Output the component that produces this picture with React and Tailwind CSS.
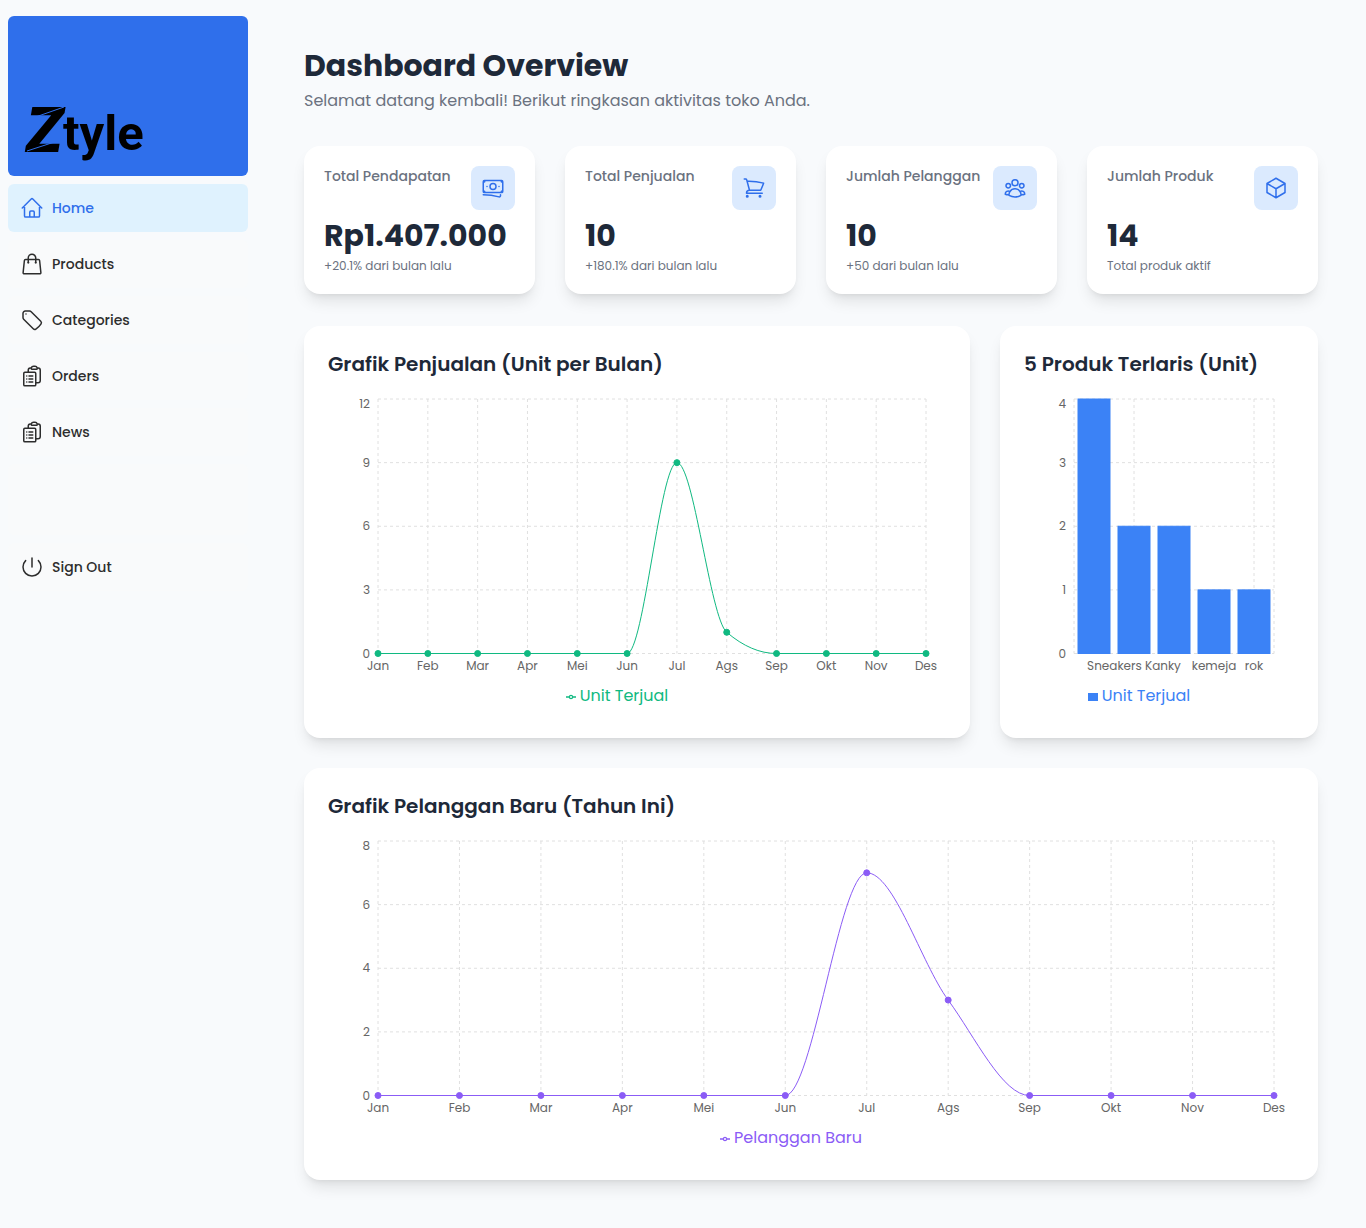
import { useLayoutEffect, useRef, useState } from 'react';
import {
  HiOutlineBanknotes,
  HiOutlineClipboardDocumentList,
  HiOutlineCube,
  HiOutlineHome,
  HiOutlinePower,
  HiOutlineShoppingBag,
  HiOutlineShoppingCart,
  HiOutlineTag,
  HiOutlineUserGroup,
} from 'react-icons/hi2';

const NAV = [
  { label: 'Home', icon: HiOutlineHome, active: true },
  { label: 'Products', icon: HiOutlineShoppingBag },
  { label: 'Categories', icon: HiOutlineTag },
  { label: 'Orders', icon: HiOutlineClipboardDocumentList },
  { label: 'News', icon: HiOutlineClipboardDocumentList },
];

const STATS = [
  { title: 'Total Pendapatan', value: 'Rp1.407.000', note: '+20.1% dari bulan lalu', icon: HiOutlineBanknotes },
  { title: 'Total Penjualan', value: '10', note: '+180.1% dari bulan lalu', icon: HiOutlineShoppingCart },
  { title: 'Jumlah Pelanggan', value: '10', note: '+50 dari bulan lalu', icon: HiOutlineUserGroup },
  { title: 'Jumlah Produk', value: '14', note: 'Total produk aktif', icon: HiOutlineCube },
];

const MONTHS = ['Jan', 'Feb', 'Mar', 'Apr', 'Mei', 'Jun', 'Jul', 'Ags', 'Sep', 'Okt', 'Nov', 'Des'];
const SALES = [0, 0, 0, 0, 0, 0, 9, 1, 0, 0, 0, 0];
const CUSTOMERS = [0, 0, 0, 0, 0, 0, 7, 3, 0, 0, 0, 0];
const TOP_PRODUCTS = [
  { name: '', units: 4 },
  { name: 'Sneakers Kanky', units: 2, grid: true },
  { name: '', units: 2 },
  { name: 'kemeja', units: 1 },
  { name: 'rok', units: 1, grid: true },
];

// Plot area inside every chart's drawing
const LEFT = 50;
const RIGHT = 20;
const TOP = 5;
const PLOT = 254.5;
const BOTTOM = TOP + PLOT;

function useWidth() {
  const ref = useRef(null);
  const [width, setWidth] = useState(0);
  useLayoutEffect(() => {
    const measure = () => setWidth(ref.current.clientWidth);
    measure();
    const observer = new ResizeObserver(measure);
    observer.observe(ref.current);
    return () => observer.disconnect();
  }, []);
  return [ref, width];
}

// Monotone cubic interpolation through the points
function monotonePath(points) {
  const slope = (i) => (points[i + 1][1] - points[i][1]) / (points[i + 1][0] - points[i][0]);
  const tangents = points.map((_, i) => {
    if (i === 0 || i === points.length - 1) return 0;
    const a = slope(i - 1);
    const b = slope(i);
    if (a * b <= 0) return 0;
    return Math.sign(a) * Math.min(2 * Math.abs(a), 2 * Math.abs(b), Math.abs(a + b) / 2);
  });
  return points.reduce((d, [x, y], i) => {
    if (i === 0) return `M${x},${y}`;
    const [px, py] = points[i - 1];
    const dx = (x - px) / 3;
    return `${d}C${px + dx},${py + dx * tangents[i - 1]},${x - dx},${y - dx * tangents[i]},${x},${y}`;
  }, '');
}

function Frame({ width, ticks, max, verticals, children }) {
  const right = width - RIGHT;
  return (
    <>
      <g stroke="#e0e0e0" strokeDasharray="3 3">
        {ticks.map((t) => {
          const y = BOTTOM - (t / max) * PLOT;
          return <line key={t} x1={LEFT} x2={right} y1={y} y2={y} />;
        })}
        {verticals.map((x) => (
          <line key={x} x1={x} x2={x} y1={TOP} y2={BOTTOM} />
        ))}
      </g>
      {ticks.map((t) => (
        <text
          key={t}
          x={LEFT - 8}
          y={Math.max(BOTTOM - (t / max) * PLOT, TOP + 5)}
          dy="4"
          textAnchor="end"
          className="fill-[#666666] text-xs"
        >
          {t}
        </text>
      ))}
      {children}
    </>
  );
}

function LineChart({ data, ticks, color }) {
  const [ref, width] = useWidth();
  const max = ticks[ticks.length - 1];
  const step = (width - LEFT - RIGHT) / (data.length - 1);
  const points = data.map((v, i) => [LEFT + i * step, BOTTOM - (v / max) * PLOT]);
  return (
    <div ref={ref} className="min-w-0">
      {width > 0 && (
        <svg width={width} height="290" className="block overflow-visible">
          <Frame width={width} ticks={ticks} max={max} verticals={points.map((p) => p[0])}>
            <path d={monotonePath(points)} fill="none" stroke={color} />
            {points.map(([x, y], i) => (
              <g key={MONTHS[i]}>
                <circle cx={x} cy={y} r="3" fill={color} stroke={color} />
                <text x={x} y={BOTTOM + 16} textAnchor="middle" className="fill-[#666666] text-xs">
                  {MONTHS[i]}
                </text>
              </g>
            ))}
          </Frame>
        </svg>
      )}
    </div>
  );
}

function BarChart({ data, ticks, color }) {
  const [ref, width] = useWidth();
  const max = ticks[ticks.length - 1];
  const band = (width - LEFT - RIGHT) / data.length;
  const center = (i) => LEFT + band * (i + 0.5);
  const inner = data.map((d, i) => (d.grid ? center(i) : null)).filter((x) => x !== null);
  return (
    <div ref={ref} className="min-w-0">
      {width > 0 && (
        <svg width={width} height="290" className="block overflow-visible">
          <Frame width={width} ticks={ticks} max={max} verticals={[LEFT, ...inner, width - RIGHT]}>
            {data.map((d, i) => {
              const height = (d.units / max) * PLOT;
              return (
                <g key={i}>
                  <rect
                    x={center(i) - band * 0.4}
                    y={BOTTOM - height}
                    width={band * 0.8}
                    height={height}
                    fill={color}
                    stroke={color}
                  />
                  {d.name && (
                    <text x={center(i)} y={BOTTOM + 16} textAnchor="middle" className="fill-[#666666] text-xs">
                      {d.name}
                    </text>
                  )}
                </g>
              );
            })}
          </Frame>
        </svg>
      )}
    </div>
  );
}

function Legend({ label, kind, className }) {
  return (
    <div className={`flex items-center justify-center gap-1 pr-10 text-base leading-6 ${className}`}>
      <svg width="10" height="14" viewBox="0 -1 10 14" aria-hidden="true">
        {kind === 'bar' ? (
          <rect x="0" y="3" width="10" height="8" fill="currentColor" />
        ) : (
          <g fill="none" stroke="currentColor">
            <path d="M0 7h3.3M6.7 7H10" strokeWidth="1.3" />
            <circle cx="5" cy="7" r="1.6" strokeWidth="1.2" />
          </g>
        )}
      </svg>
      <span>{label}</span>
    </div>
  );
}

function Panel({ title, className = '', children }) {
  return (
    <section className={`min-w-0 rounded-2xl bg-white p-6 shadow-lg ${className}`}>
      <h2 className="mb-4 text-xl leading-7 font-semibold text-gray-800">{title}</h2>
      <div className="min-h-80">{children}</div>
    </section>
  );
}

function Logo() {
  return (
    <svg width="136" height="76" viewBox="0 0 136 76" role="img" aria-label="Ztyle" className="font-[Roboto,sans-serif]">
      <text x="2" y="60" className="fill-black text-[62px] font-black italic">Z</text>
      <text x="39" y="58" className="fill-black text-[49px] font-bold">tyle</text>
      <path d="M13 24.500 40 15M3 59 29 50.500" stroke="#2f6feb" strokeWidth="1" />
    </svg>
  );
}

export default function App() {
  return (
    <div className="flex min-h-screen bg-[#f8fafc] font-[Poppins,Inter,sans-serif]">
      <aside className="flex w-64 shrink-0 flex-col gap-2 px-2 py-4 text-sm font-medium text-[#2d2d2d]">
        <a href="#home" className="flex h-40 items-end rounded-md bg-[#2f6feb] px-4 py-2">
          <Logo />
        </a>
        <nav className="flex flex-col gap-2">
          {NAV.map(({ label, icon: Icon, active }) => (
            <a
              key={label}
              href={`#${label.toLowerCase()}`}
              className={`flex h-12 items-center gap-2 rounded-md px-3 ${active ? 'bg-sky-100 text-[#2f6feb]' : 'bg-[#f9fafb]'}`}
            >
              <Icon className="size-6" />
              {label}
            </a>
          ))}
        </nav>
        <div className="h-[71px] rounded-md bg-[#f9fafb]" />
        <button type="button" className="flex h-12 items-center gap-2 rounded-md bg-[#f9fafb] px-3">
          <HiOutlinePower className="size-6" />
          Sign Out
        </button>
      </aside>

      <main className="min-w-0 grow p-12">
        <header className="mb-[33px]">
          <h1 className="text-3xl leading-9 font-bold text-gray-800">Dashboard Overview</h1>
          <p className="mt-[5px] text-base leading-6 text-[#6b7280]">
            Selamat datang kembali! Berikut ringkasan aktivitas toko Anda.
          </p>
        </header>

        <div className="mb-8 grid grid-cols-4 gap-[30px]">
          {STATS.map(({ title, value, note, icon: Icon }) => (
            <section key={title} className="rounded-2xl bg-white p-5 shadow-lg">
              <div className="flex items-start justify-between">
                <h3 className="text-sm leading-5 font-medium whitespace-nowrap text-[#6b7280]">{title}</h3>
                <div className="rounded-lg bg-blue-100 p-2.5 text-[#2f6feb]">
                  <Icon className="size-6" />
                </div>
              </div>
              <p className="mt-2 text-3xl leading-9 font-bold text-gray-800">{value}</p>
              <p className="mt-1 text-xs leading-4 text-[#6b7280]">{note}</p>
            </section>
          ))}
        </div>

        <div className="grid grid-cols-3 gap-[30px]">
          <Panel title="Grafik Penjualan (Unit per Bulan)" className="col-span-2">
            <LineChart data={SALES} ticks={[0, 3, 6, 9, 12]} color="#10b981" />
            <Legend label="Unit Terjual" className="text-[#10b981]" />
          </Panel>
          <Panel title="5 Produk Terlaris (Unit)">
            <BarChart data={TOP_PRODUCTS} ticks={[0, 1, 2, 3, 4]} color="#3b82f6" />
            <Legend label="Unit Terjual" kind="bar" className="text-[#3b82f6]" />
          </Panel>
          <Panel title="Grafik Pelanggan Baru (Tahun Ini)" className="col-span-3">
            <LineChart data={CUSTOMERS} ticks={[0, 2, 4, 6, 8]} color="#8b5cf6" />
            <Legend label="Pelanggan Baru" className="text-[#8b5cf6]" />
          </Panel>
        </div>
      </main>
    </div>
  );
}
